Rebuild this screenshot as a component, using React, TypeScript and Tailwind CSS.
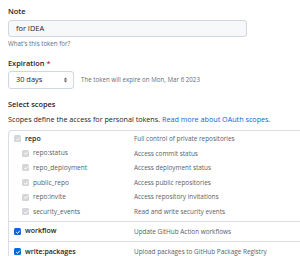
import React from "react";

type Scope = { name: string; desc: string; sub?: boolean; checked: boolean; disabled?: boolean };

const repoScopes: Scope[] = [
  { name: "repo", desc: "Full control of private repositories", checked: true, disabled: true },
  { name: "repo:status", desc: "Access commit status", sub: true, checked: true, disabled: true },
  { name: "repo_deployment", desc: "Access deployment status", sub: true, checked: true, disabled: true },
  { name: "public_repo", desc: "Access public repositories", sub: true, checked: true, disabled: true },
  { name: "repo:invite", desc: "Access repository invitations", sub: true, checked: true, disabled: true },
  { name: "security_events", desc: "Read and write security events", sub: true, checked: true, disabled: true },
];

function Check({ disabled }: { disabled?: boolean }) {
  return (
    <span
      className={
        "flex h-[7px] w-[7px] shrink-0 items-center justify-center rounded-[1.5px] " +
        (disabled ? "bg-[#d4d6d9]" : "bg-[#0969da]")
      }
    >
      <svg viewBox="0 0 10 10" className="h-[6px] w-[6px]">
        <path d="M2 5.2 L4.2 7.3 L8.2 2.8" fill="none" stroke="white" strokeWidth="1.6" />
      </svg>
    </span>
  );
}

function Row({ s }: { s: Scope }) {
  return (
    <div className="flex h-[14.6px] items-center">
      <div className={"flex w-[125px] items-center gap-[4px] " + (s.sub ? "pl-[13px]" : "pl-[5px]")}>
        <Check disabled={s.disabled} />
        <span
          className={
            "whitespace-nowrap " +
            (s.sub ? "text-[6.6px] text-[#57606a]" : "text-[7px] font-semibold text-[#1f2328]")
          }
        >
          {s.name}
        </span>
      </div>
      <span className="whitespace-nowrap text-[6.4px] text-[#57606a]">{s.desc}</span>
    </div>
  );
}

export default function App() {
  return (
    <div
      className="h-[256px] w-[300px] overflow-hidden bg-white pl-[8px] pt-[6px] text-[#1f2328]"
      style={{ fontFamily: '"Open Sans", "Noto Sans", sans-serif' }}
    >
      <div className="text-[7.4px] font-semibold leading-[10px]">Note</div>
      <div className="mt-[4px] flex h-[17px] w-[239px] items-center rounded-[3px] border border-[#d0d7de] bg-[#f6f8fa] pl-[7px] text-[7.4px]">
        for IDEA
      </div>
      <div className="mt-[3px] text-[6.2px] leading-[8px] text-[#656d76]">What's this token for?</div>

      <div className="mt-[10px] text-[7.4px] font-semibold leading-[10px]">
        Expiration <span className="text-[#cf222e]">*</span>
      </div>
      <div className="mt-[3px] flex items-center gap-[7px]">
        <div className="flex h-[18px] w-[66px] items-center justify-between rounded-[3px] border border-[#d0d7de] bg-white pl-[7px] pr-[5px] text-[7.4px]">
          <span>30 days</span>
          <svg viewBox="0 0 8 10" className="h-[6px] w-[5px]">
            <path d="M1 4 L4 1 L7 4 Z M1 6 L4 9 L7 6 Z" fill="#57606a" />
          </svg>
        </div>
        <span className="text-[6.2px] text-[#656d76]">The token will expire on Mon, Mar 6 2023</span>
      </div>

      <div className="mt-[9.5px] text-[7.4px] font-semibold leading-[10px]">Select scopes</div>
      <div className="mt-[5px] whitespace-nowrap text-[7.2px] leading-[10px] text-[#1f2328]">
        Scopes define the access for personal tokens.{" "}
        <span className="text-[#0969da]">Read more about OAuth scopes.</span>
      </div>

      <div className="mt-[6px] w-[320px] rounded-tl-[4px] border-l border-t border-[#d8dee4]">
        <div className="border-b border-[#d8dee4] pb-[2px] pt-[1px]">
          {repoScopes.map((s) => (
            <Row key={s.name} s={s} />
          ))}
        </div>
        <div className="border-b border-[#d8dee4] py-[2.2px]">
          <Row s={{ name: "workflow", desc: "Update GitHub Action workflows", checked: true }} />
        </div>
        <div className="py-[2.5px]">
          <Row s={{ name: "write:packages", desc: "Upload packages to GitHub Package Registry", checked: true }} />
        </div>
      </div>
    </div>
  );
}
